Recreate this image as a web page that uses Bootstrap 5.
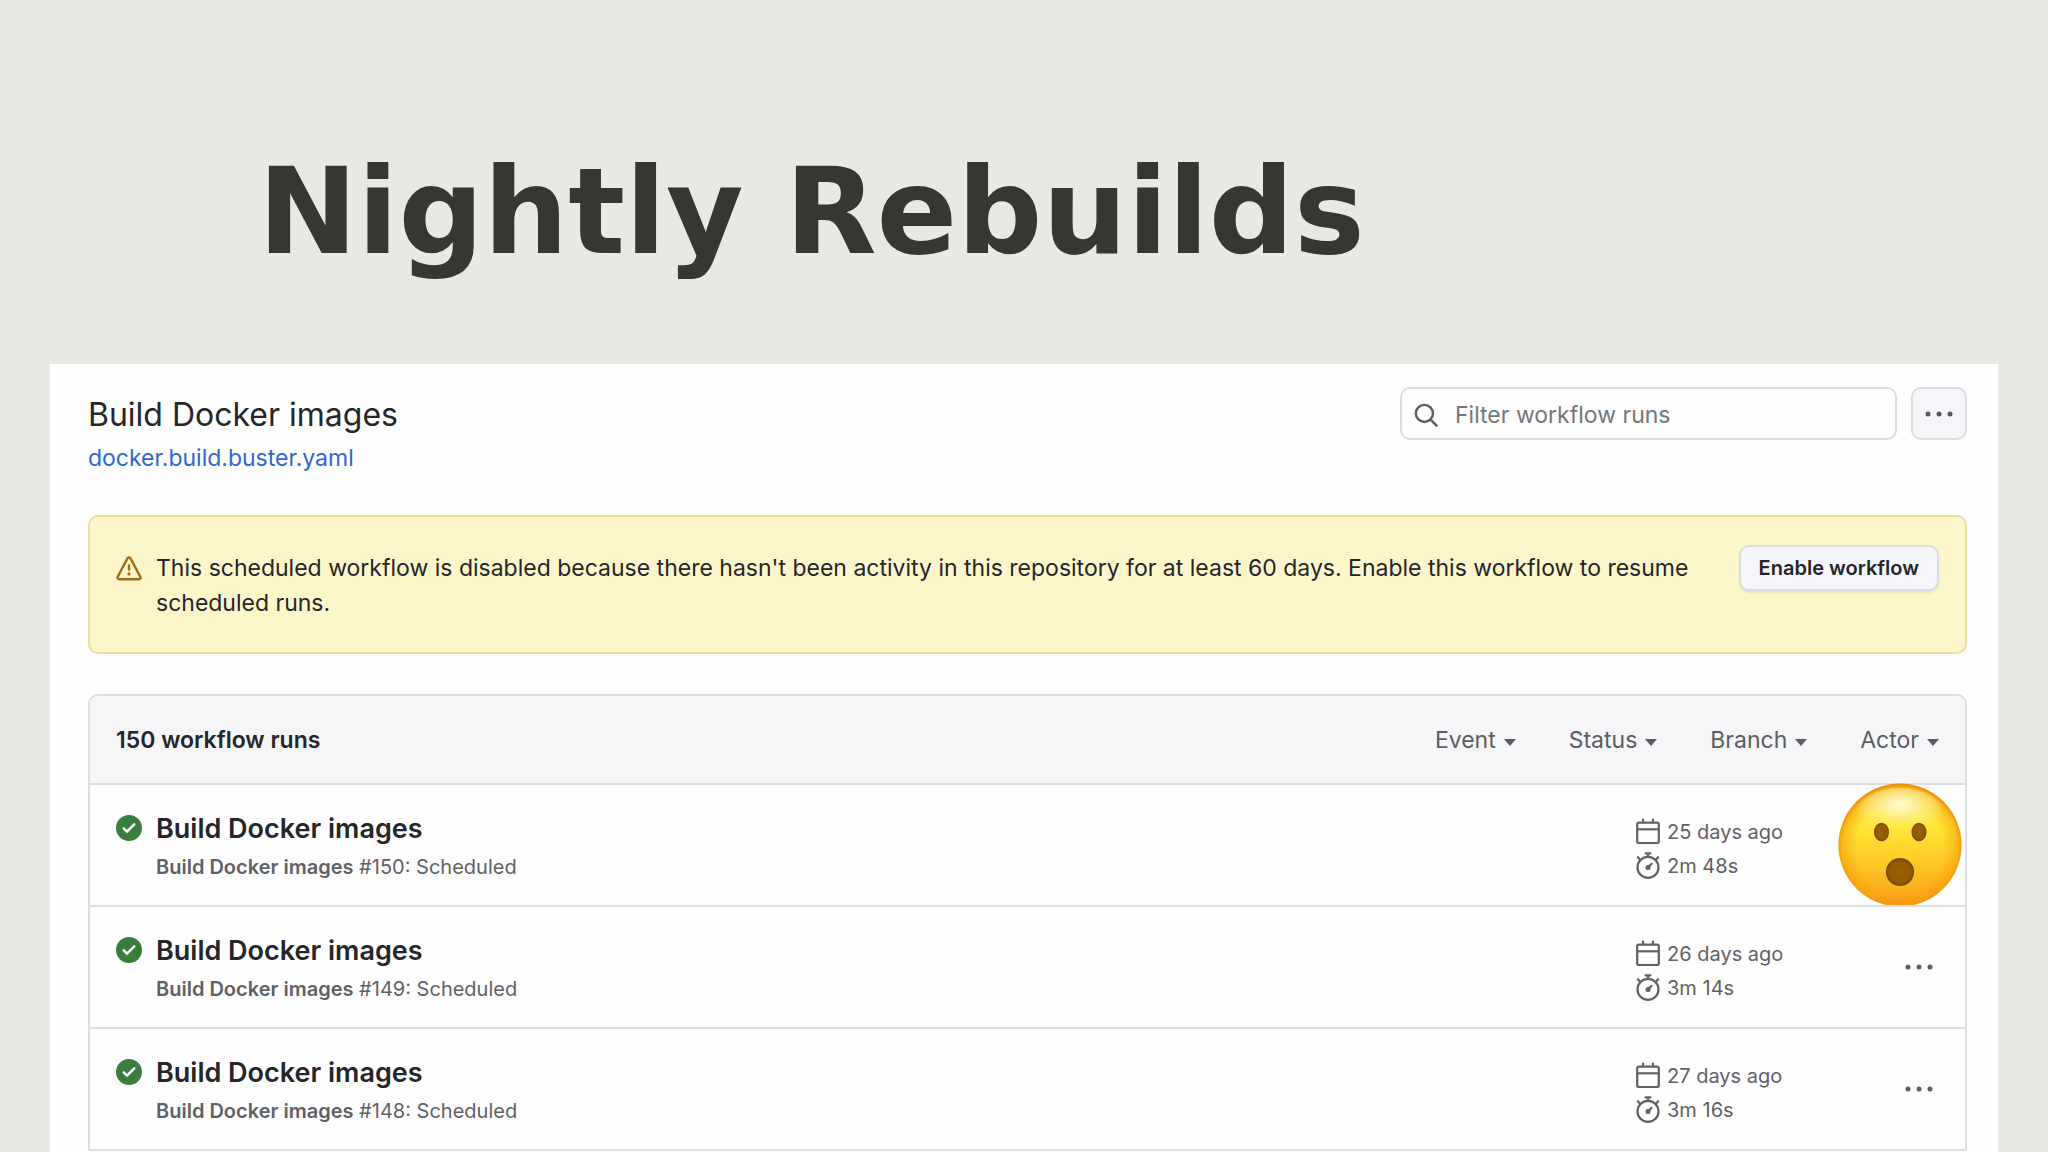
<!DOCTYPE html>
<html lang="en">
<head>
<meta charset="utf-8">
<meta name="viewport" content="width=device-width, initial-scale=1">
<title>Nightly Rebuilds</title>
<link href="https://cdn.jsdelivr.net/npm/bootstrap@5.3.0/dist/css/bootstrap.min.css" rel="stylesheet">
<style>
  body { background: #e8e9e3; color: #24262a; font-family: Inter, "Liberation Sans", sans-serif; font-size: 23px; line-height: 34px; overflow-x: hidden; }
  .slide-title { color: #373731; font-family: "DejaVu Sans", Inter, sans-serif; font-size: 119px; line-height: 148px; font-weight: 700; padding: 138px 258px 78px; }
  .panel { background: #fefefe; margin: 0 50px; padding: 23px 31px 32px 38px; }
  .page-head { gap: 14px; }
  .page-name { font-size: 32px; line-height: 52px; padding-top: 2px; }
  .file-link { color: #2f68d0; text-decoration: none; }
  .head-tools { gap: 14px; }
  .search-box { width: 497px; }
  .search-box .form-control { height: 53px; border: 2px solid #dcdde2; border-radius: 10px; padding: 2px 16px 0 53px; font-size: 23px; color: #24262a; background: #fefefe; }
  .search-box .form-control::placeholder { color: #74777b; opacity: 1; }
  .search-box svg { position: absolute; left: 13px; top: 15px; }
  .btn-soft { background: #f5f6f9; border: 2px solid #dbdce1; border-radius: 10px; color: #24262a; }
  .btn-menu { width: 56px; height: 53px; padding: 0; display: flex; align-items: center; justify-content: center; color: #55585d; }
  .btn-enable { font-size: 20px; line-height: 28px; font-weight: 600; padding: 7px 18px; white-space: nowrap; box-shadow: 0 2px 2px rgba(90, 90, 60, .12); }
  .notice { background: #fef6cb; border: 2px solid #ecdd9c; border-radius: 10px; margin: 40px 0; padding: 28px 26px; gap: 14px; }
  .notice p { line-height: 35px; padding: 6px 0 3px; }
  .notice svg { margin-top: 11px; }
  .notice .btn-enable { margin-left: 30px; }
  .runs { border: 2px solid #dcdde1; border-radius: 10px 10px 0 0; }
  .runs-head { background: #f6f6f9; padding: 26px 26px 25px; border-radius: 8px 8px 0 0; font-weight: 600; line-height: 36px; }
  .filters { gap: 53px; }
  .filter-btn { border: 0; background: none; padding: 0; color: #5a5d63; display: flex; align-items: center; gap: 8px; font-weight: 400; }
  .filter-btn::after { border-top-width: 7px; border-left-width: 6px; border-right-width: 6px; margin: 4px 0 0; }
  .run { position: relative; border-top: 2px solid #dcdde1; padding: 26px 26px 21px; gap: 14px; }
  .run-name { color: #24262a; font-size: 27px; line-height: 36px; font-weight: 600; text-decoration: none; }
  .run-sub { color: #5e6166; font-size: 20px; line-height: 34px; margin-top: 3px; }
  .run-meta { color: #5e6166; font-size: 20px; line-height: 34px; width: 247px; padding-top: 4px; }
  .run-meta div { gap: 5px; }
  .run-menu { width: 48px; height: 48px; display: flex; align-items: center; justify-content: center; border: 0; background: none; padding: 0; color: #5a5d63; margin: 10px -4px 0 0; }
  .surprise { position: absolute; right: 3px; top: -2px; }
  .status-icon { margin-top: 4px; color: #3a7d3c; }
</style>
</head>
<body>
<svg width="0" height="0" class="position-absolute" aria-hidden="true">
  <defs>
    <symbol id="i-check" viewBox="0 0 16 16"><circle cx="8" cy="8" r="8" fill="currentColor"/><path d="M4.750 8.250L6.750 10.250L11.250 5.750" fill="none" stroke="#fff" stroke-width="1.500" stroke-linecap="round" stroke-linejoin="round"/></symbol>
    <symbol id="i-cal" viewBox="0 0 28 28"><g fill="none" stroke="currentColor" stroke-width="2.200"><rect x="3.200" y="4.600" width="21.600" height="20.400" rx="1.800"/><path d="M3.200 11.300H24.600"/><path d="M9 4.500V1.500M19 4.500V1.500" stroke-linecap="round"/></g></symbol>
    <symbol id="i-watch" viewBox="0 0 28 28"><g fill="none" stroke="currentColor" stroke-width="2.200" stroke-linecap="round"><circle cx="14" cy="15.400" r="10.500"/><path d="M11.600 1.400H16.400M14 1.800V4.700M3.800 5.200L6.200 7.800M24.200 5.200L21.800 7.800M14 15.400L17.600 11.800"/></g><circle cx="14" cy="15.500" r="2.500" fill="currentColor"/></symbol>
    <symbol id="i-dots" viewBox="0 0 30 10"><g fill="currentColor"><circle cx="4" cy="5" r="2.500"/><circle cx="15" cy="5" r="2.500"/><circle cx="26" cy="5" r="2.500"/></g></symbol>
  </defs>
</svg>

<h1 class="slide-title m-0">Nightly Rebuilds</h1>

<main class="panel">
  <header class="page-head d-flex justify-content-between align-items-start">
    <div>
      <h2 class="page-name fw-normal m-0">Build Docker images</h2>
      <a class="file-link d-block" href="#">docker.build.buster.yaml</a>
    </div>
    <div class="head-tools d-flex">
      <div class="search-box position-relative">
        <svg width="26" height="26" viewBox="0 0 16 16" fill="none" stroke="#5a5d63" stroke-width="1.500" stroke-linecap="round" aria-hidden="true"><circle cx="7" cy="7" r="5.250"/><path d="M11 11L14.500 14.500"/></svg>
        <input class="form-control" type="search" placeholder="Filter workflow runs" aria-label="Filter workflow runs">
      </div>
      <button class="btn btn-soft btn-menu" type="button" aria-label="Workflow options"><svg width="30" height="10"><use href="#i-dots"/></svg></button>
    </div>
  </header>

  <section class="notice d-flex align-items-start">
    <svg class="flex-shrink-0" width="26" height="26" viewBox="0 0 16 16" fill="#9f6b14" fill-rule="evenodd" aria-hidden="true"><path d="M8.220 1.754a.25.25 0 00-.44 0L1.698 13.132a.25.25 0 00.22.368h12.164a.25.25 0 00.22-.368L8.220 1.754zm-1.763-.707c.659-1.234 2.427-1.234 3.086 0l6.082 11.378A1.750 1.750 0 0114.082 15H1.918a1.750 1.750 0 01-1.543-2.575L6.457 1.047zM9 11a1 1 0 11-2 0 1 1 0 012 0zm-.25-5.250a.75.75 0 00-1.500 0v2.500a.75.75 0 001.500 0v-2.500z"/></svg>
    <p class="flex-grow-1 m-0">This scheduled workflow is disabled because there hasn't been activity in this repository for at least 60 days. Enable this workflow to resume scheduled runs.</p>
    <button class="btn btn-soft btn-enable" type="button">Enable workflow</button>
  </section>

  <section class="runs">
    <div class="runs-head d-flex justify-content-between">
      <span>150 workflow runs</span>
      <div class="filters d-flex">
        <button class="filter-btn dropdown-toggle" type="button">Event</button>
        <button class="filter-btn dropdown-toggle" type="button">Status</button>
        <button class="filter-btn dropdown-toggle" type="button">Branch</button>
        <button class="filter-btn dropdown-toggle" type="button">Actor</button>
      </div>
    </div>
    <article class="run d-flex align-items-start">
      <svg class="status-icon flex-shrink-0" width="26" height="26"><use href="#i-check"/></svg>
      <div class="flex-grow-1">
        <a class="run-name d-block" href="#">Build Docker images</a>
        <div class="run-sub"><b class="fw-semibold">Build Docker images</b> #150: Scheduled</div>
      </div>
      <div class="run-meta">
        <div class="d-flex align-items-center"><svg width="28" height="28"><use href="#i-cal"/></svg>25 days ago</div>
        <div class="d-flex align-items-center"><svg width="28" height="28"><use href="#i-watch"/></svg>2m 48s</div>
      </div>
      <button class="run-menu" type="button" aria-label="Run options"><svg width="30" height="10"><use href="#i-dots"/></svg></button>
      <svg class="surprise" width="124" height="124" viewBox="0 0 124 124" role="img" aria-label="Surprised face">
        <defs>
          <linearGradient id="face" x1="0" y1="0" x2="0" y2="1"><stop offset="0" stop-color="#ffe95a"/><stop offset=".35" stop-color="#ffe636"/><stop offset=".65" stop-color="#fec824"/><stop offset="1" stop-color="#f99c1a"/></linearGradient>
          <radialGradient id="rim" cx=".5" cy=".52" r=".52"><stop offset=".68" stop-color="#f59a08" stop-opacity="0"/><stop offset=".9" stop-color="#f59a08" stop-opacity=".5"/><stop offset="1" stop-color="#ea8200" stop-opacity=".95"/></radialGradient>
          <radialGradient id="shine" cx=".5" cy=".35" r=".6"><stop offset="0" stop-color="#fffef0" stop-opacity=".85"/><stop offset="1" stop-color="#fff59a" stop-opacity="0"/></radialGradient>
          <radialGradient id="hole"><stop offset="0" stop-color="#9a6000"/><stop offset=".75" stop-color="#935a00"/><stop offset="1" stop-color="#744300"/></radialGradient>
        </defs>
        <circle cx="62" cy="62" r="61.500" fill="url(#face)"/>
        <circle cx="62" cy="62" r="61.500" fill="url(#rim)"/>
        <ellipse cx="62" cy="28" rx="42" ry="23" fill="url(#shine)"/>
        <ellipse cx="43.500" cy="49" rx="7.500" ry="9.300" fill="url(#hole)"/>
        <ellipse cx="81" cy="49" rx="7.500" ry="9.300" fill="url(#hole)"/>
        <circle cx="62" cy="89" r="14" fill="url(#hole)"/>
      </svg>
    </article>
    <article class="run d-flex align-items-start">
      <svg class="status-icon flex-shrink-0" width="26" height="26"><use href="#i-check"/></svg>
      <div class="flex-grow-1">
        <a class="run-name d-block" href="#">Build Docker images</a>
        <div class="run-sub"><b class="fw-semibold">Build Docker images</b> #149: Scheduled</div>
      </div>
      <div class="run-meta">
        <div class="d-flex align-items-center"><svg width="28" height="28"><use href="#i-cal"/></svg>26 days ago</div>
        <div class="d-flex align-items-center"><svg width="28" height="28"><use href="#i-watch"/></svg>3m 14s</div>
      </div>
      <button class="run-menu" type="button" aria-label="Run options"><svg width="30" height="10"><use href="#i-dots"/></svg></button>
    </article>
    <article class="run d-flex align-items-start">
      <svg class="status-icon flex-shrink-0" width="26" height="26"><use href="#i-check"/></svg>
      <div class="flex-grow-1">
        <a class="run-name d-block" href="#">Build Docker images</a>
        <div class="run-sub"><b class="fw-semibold">Build Docker images</b> #148: Scheduled</div>
      </div>
      <div class="run-meta">
        <div class="d-flex align-items-center"><svg width="28" height="28"><use href="#i-cal"/></svg>27 days ago</div>
        <div class="d-flex align-items-center"><svg width="28" height="28"><use href="#i-watch"/></svg>3m 16s</div>
      </div>
      <button class="run-menu" type="button" aria-label="Run options"><svg width="30" height="10"><use href="#i-dots"/></svg></button>
    </article>
  </section>
</main>
<script src="https://cdn.jsdelivr.net/npm/bootstrap@5.3.0/dist/js/bootstrap.bundle.min.js"></script>
</body>
</html>
